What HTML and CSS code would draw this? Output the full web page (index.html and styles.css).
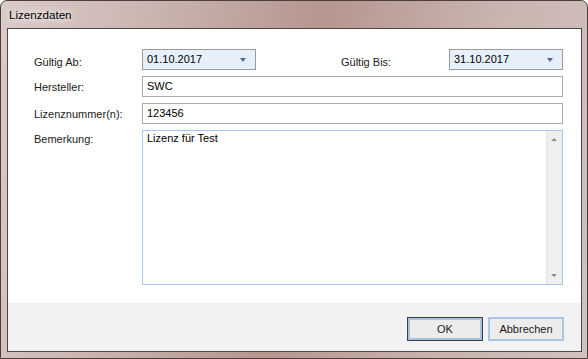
FILE: index.html
```html
<!DOCTYPE html>
<html>
<head>
	<title>Lizenzdaten</title>
	<link rel="stylesheet" href="styles.css">
</head>
<body>
	<div class="window">
		<div class="titlebar">Lizenzdaten</div>
		<div class="client">
			<div class="form">
				<div class="lbl first">Gültig Ab:</div>
				<div class="date">01.10.2017<span class="arrow"></span></div>
				<div class="lbl first bis">Gültig Bis:</div>
				<div class="date">31.10.2017<span class="arrow"></span></div>

				<div class="lbl">Hersteller:</div>
				<div class="textbox wide">SWC</div>

				<div class="lbl">Lizenznummer(n):</div>
				<div class="textbox wide">123456</div>

				<div class="lbl memolbl">Bemerkung:</div>
				<div class="memo wide">
					<div class="memotext">Lizenz für Test</div>
					<div class="scroll">
						<span class="up"></span>
						<span class="down"></span>
					</div>
				</div>
			</div>
			<div class="buttons">
				<div class="btn default">OK</div>
				<div class="btn">Abbrechen</div>
			</div>
		</div>
	</div>
</body>
</html>
```

FILE: styles.css
```css
html, body {
	margin: 0;
	padding: 0;
	background-color: #FFF;
}
body {
	font-family: "Liberation Sans", Arial, sans-serif;
	font-size: 11px;
	color: #000;
}
.window {
	box-sizing: border-box;
	width: 588px;
	height: 359px;
	border: solid 1px #4a3f3d;
	border-radius: 7px 7px 0 0;
	padding: 0 5px 6px 6px;
	background: linear-gradient(100deg, #d9cbc8 0%, #c9b3ae 25%, #b6968f 50%, #c8b2ad 75%, #d1c2be 100%);
	display: flex;
	flex-direction: column;
}
.titlebar {
	height: 27px;
	line-height: 27px;
	padding-left: 2px;
	font-size: 11.6px;
	color: #000;
	text-shadow: 0 0 6px #FFF, 0 0 10px #FFF;
}
.client {
	flex: 1;
	border: solid 1px #4d4746;
	background-color: #FFF;
	display: flex;
	flex-direction: column;
}
.form {
	flex: 1;
	display: grid;
	grid-template-columns: 108px 114px 193px 114px;
	grid-template-rows: 21px 21px 21px 155px;
	row-gap: 6px;
	padding: 20px 18px 0 26px;
	align-content: start;
}
.lbl {
	align-self: center;
	color: #1a1a1a;
}
.lbl.first {
	padding-top: 4px;
}
.lbl.bis {
	padding-left: 85px;
}
.memolbl {
	align-self: start;
	padding-top: 3px;
}
.wide {
	grid-column: 2 / 5;
}
.date {
	box-sizing: border-box;
	position: relative;
	border: solid 1px #9c9c9c;
	background-color: #e7f0fa;
	padding: 0 4px;
	line-height: 18px;
}
.arrow {
	position: absolute;
	right: 9px;
	top: 8px;
	width: 0;
	height: 0;
	border-left: 3px solid transparent;
	border-right: 3px solid transparent;
	border-top: 4px solid #4e6d9e;
}
.textbox {
	box-sizing: border-box;
	border: solid 1px #aaaaaa;
	padding: 0 4px;
	line-height: 19px;
}
.memo {
	box-sizing: border-box;
	border: solid 1px #a9c6ec;
	display: flex;
}
.memotext {
	flex: 1;
	padding: 1px 4px;
	line-height: 13px;
}
.scroll {
	width: 16px;
	background: linear-gradient(90deg, #e6e6e6 0%, #f0f0f0 20%, #eeeeee 100%);
	position: relative;
}
.up, .down {
	position: absolute;
	left: 5px;
	width: 0;
	height: 0;
	border-left: 3px solid transparent;
	border-right: 3px solid transparent;
}
.up {
	top: 7px;
	border-bottom: 3px solid #8c8c8c;
}
.down {
	bottom: 7px;
	border-top: 3px solid #8c8c8c;
}
.buttons {
	height: 48px;
	box-sizing: border-box;
	background-color: #f2f2f2;
	display: flex;
	justify-content: flex-end;
	gap: 5px;
	padding: 14px 17px 0 0;
}
.btn {
	box-sizing: border-box;
	width: 76px;
	height: 24px;
	line-height: 20px;
	text-align: center;
	background-color: #ececec;
	border: solid 2px #adc4e4;
	color: #1a1a1a;
}
.btn.default {
	border: solid 1px #3e3e3e;
	box-shadow: inset 0 0 0 2px #a9c0e2;
	line-height: 22px;
}
```
